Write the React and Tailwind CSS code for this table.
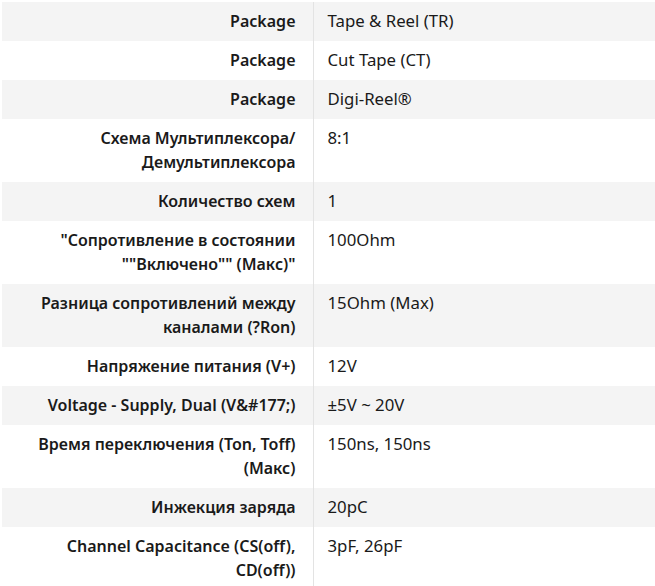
import React from 'react';

const rows = [
    ['Package', 'Tape & Reel (TR)'],
    ['Package', 'Cut Tape (CT)'],
    ['Package', 'Digi-Reel®'],
    ['Схема Мультиплексора/ Демультиплексора', '8:1'],
    ['Количество схем', '1'],
    ['"Сопротивление в состоянии ""Включено"" (Макс)"', '100Ohm'],
    ['Разница сопротивлений между каналами (?Ron)', '15Ohm (Max)'],
    ['Напряжение питания (V+)', '12V'],
    ['Voltage - Supply, Dual (V&#177;)', '±5V ~ 20V'],
    ['Время переключения (Ton, Toff) (Макс)', '150ns, 150ns'],
    ['Инжекция заряда', '20pC'],
    ['Channel Capacitance (CS(off), CD(off))', '3pF, 26pF'],
];

const App = () => {
    return (
        <div className="pl-[2px] pt-[2px] bg-white min-h-screen" style={{ fontFamily: '"Noto Sans", "Open Sans", sans-serif' }}>
            <table className="w-full border-collapse text-[16px] leading-6 text-[#1a1a1a]">
                <tbody>
                    {rows.map(([label, value], i) => (
                        <tr key={i} className={i % 2 === 0 ? 'bg-[#f4f4f4]' : 'bg-white'}>
                            <td className="w-[311px] pl-3 pr-[17px] pt-[7px] pb-[8px] text-right align-top font-semibold border-r border-[#e3e3e3]">
                                {label}
                            </td>
                            <td className="pl-[14px] pr-3 pt-[7px] pb-[8px] align-top text-[16.8px]">{value}</td>
                        </tr>
                    ))}
                </tbody>
            </table>
        </div>
    );
};

export default App;
